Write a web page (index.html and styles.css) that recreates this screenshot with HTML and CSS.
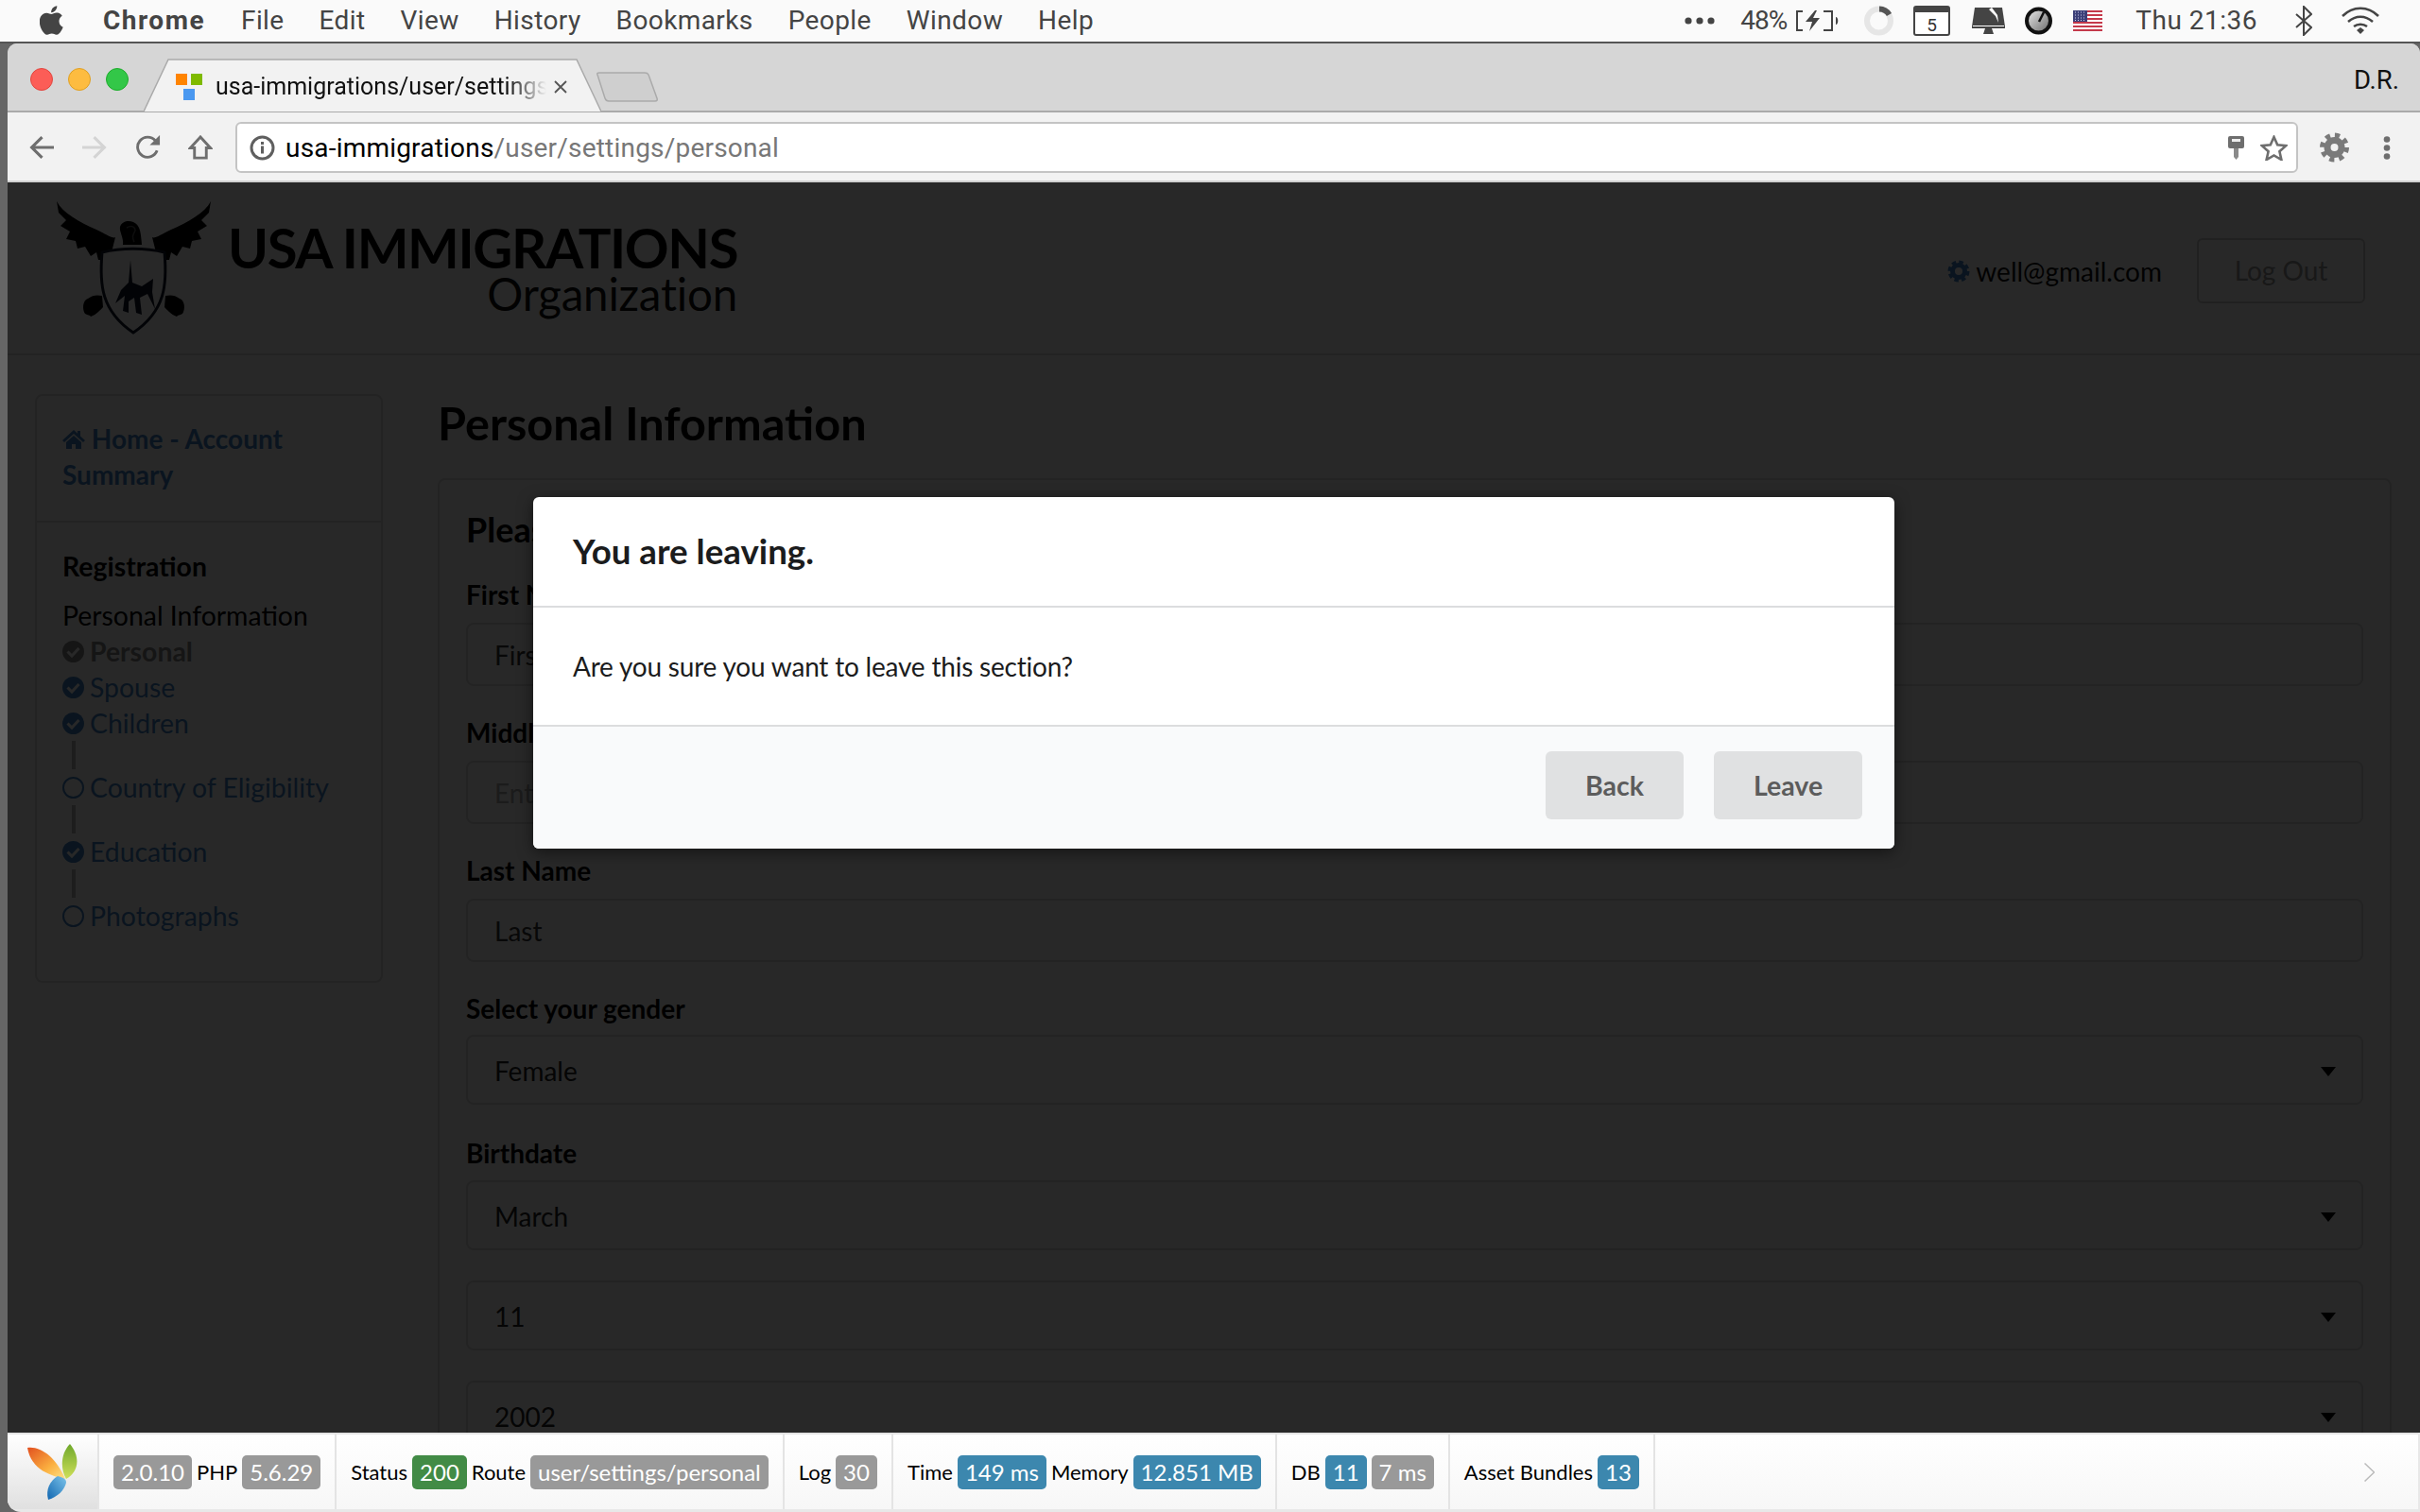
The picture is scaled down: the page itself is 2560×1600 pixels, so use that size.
FILE: index.html
```html
<!DOCTYPE html>
<html>
<head>
  <meta charset="utf-8">
  <title>usa-immigrations/user/settings/personal</title>
  <link rel="stylesheet" href="styles.css">
</head>
<body>
<!-- mac menu bar -->
<div class="menubar">
  <svg class="apple" viewBox="4 2 17 20"><path d="M18.71 19.5c-.83 1.24-1.71 2.45-3.05 2.47-1.34.03-1.77-.79-3.29-.79-1.53 0-2 .77-3.27.82-1.31.05-2.3-1.32-3.14-2.53C4.25 17 2.94 12.45 4.7 9.39c.87-1.52 2.43-2.48 4.12-2.51 1.28-.02 2.5.87 3.29.87.78 0 2.26-1.07 3.81-.91.65.03 2.47.26 3.64 1.98-.09.06-2.17 1.28-2.15 3.81.03 3.02 2.65 4.03 2.68 4.04-.03.07-.42 1.44-1.38 2.83M13 3.5c.73-.83 1.94-1.46 2.94-1.5.13 1.17-.34 2.35-1.04 3.19-.69.85-1.83 1.51-2.95 1.42-.15-1.15.41-2.35 1.05-3.11z"/></svg>
  <div class="menu-app">Chrome</div>
  <div class="menu-items">
    <span>File</span><span>Edit</span><span>View</span><span>History</span><span>Bookmarks</span><span>People</span><span>Window</span><span>Help</span>
  </div>
  <div class="status">
    <svg class="st-dots" viewBox="0 0 32 8"><circle cx="4" cy="4" r="3.6"/><circle cx="16" cy="4" r="3.6"/><circle cx="28" cy="4" r="3.6"/></svg>
    <span class="st-pct">48%</span>
    <svg class="st-batt" viewBox="0 0 47 22"><path d="M8 1H2v20h6M30 1h9v20h-9" fill="none" stroke="#444" stroke-width="2"/><path d="M21 0L11 12h7l-3 10 11-14h-7l4-8z"/><path d="M43 7c3 0 3 8 0 8z"/></svg>
    <svg class="st-spin" viewBox="0 0 31 32"><circle cx="15.5" cy="16" r="12.5" fill="none" stroke="#e6e6e6" stroke-width="6"/><path d="M16 3.500a12.500 12.500 0 0 1 10.500 6" fill="none" stroke="#555" stroke-width="6"/></svg>
    <svg class="st-cal" viewBox="0 0 39 32"><rect x="1" y="1" width="37" height="30" rx="2" fill="#fff" stroke="#444" stroke-width="2"/><rect x="1" y="1" width="37" height="6" fill="#444"/><text x="19.500" y="27" text-anchor="middle" font-family="Roboto" font-size="19" fill="#333">5</text></svg>
    <svg class="st-mon" viewBox="0 0 35 28"><path d="M3 0h29l3 20H0z" fill="#444"/><path d="M21 0l6 8 1 8-3-7-7-7z" fill="#fff"/><rect x="1" y="19" width="33" height="3" fill="#fff"/><path d="M0 20h35v2H0zM14 22h7l2 6H12z" fill="#444"/></svg>
    <svg class="st-gauge" viewBox="0 0 31 30">
      <defs><linearGradient id="gg" x1="0" y1="0" x2="1" y2="1"><stop offset="0" stop-color="#eee"/><stop offset="1" stop-color="#666"/></linearGradient></defs>
      <circle cx="15.500" cy="15" r="12.500" fill="url(#gg)" stroke="#111" stroke-width="4"/><path d="M21 6l-5 10" stroke="#111" stroke-width="2.500"/>
    </svg>
    <svg class="st-flag" viewBox="0 0 31 22">
      <rect width="31" height="22" fill="#fff"/>
      <path d="M0 0h31v2H0zM0 4h31v2H0zM0 8h31v2H0zM0 12h31v2H0zM0 16h31v2H0zM0 20h31v2H0z" fill="#c4394a"/>
      <rect width="15" height="12" fill="#3c3f78"/>
      <path d="M2 2h11M2 5h11M2 8h11M2 10.500h11" stroke="#cfd2ea" stroke-width="1" stroke-dasharray="1 2"/>
    </svg>
    <span class="st-time">Thu 21:36</span>
    <svg class="st-bt" viewBox="0 0 18 32"><path d="M1 9l16 14-8 8V1l8 8L1 23" fill="none" stroke="#444" stroke-width="2"/></svg>
    <svg class="st-wifi" viewBox="0 0 42 29"><path d="M2 10c11-11 27-11 38 0M8 16c8-7 18-7 26 0M14 21c4-3 10-3 14 0" fill="none" stroke="#444" stroke-width="2.500"/><path d="M17 25l4-3 4 3-4 4z"/></svg>
  </div>
</div>

<div class="window">
  <!-- browser chrome -->
  <div class="tabstrip">
    <div class="lights">
      <div class="light light-red"></div>
      <div class="light light-yellow"></div>
      <div class="light light-green"></div>
    </div>
    <div class="tab">
      <svg class="tab-shape" viewBox="0 0 484 57"><path d="M0 56L26 1H458L484 56" fill="#f2f2f2" stroke="#aaa" stroke-width="1.500"/></svg>
      <svg class="favicon" viewBox="0 0 28 28"><rect width="12" height="12" fill="#ff8400"/><rect x="16" width="12" height="12" fill="#7fba00"/><rect x="8" y="16" width="12" height="12" fill="#4a98f0"/></svg>
      <span class="tab-title">usa-immigrations/user/settings/personal</span>
      <svg class="tab-close" viewBox="0 0 14 14"><path d="M1 1l12 12M13 1L1 13" stroke="#555" stroke-width="1.800"/></svg>
    </div>
    <svg class="newtab" viewBox="0 0 66 32"><path d="M2 3Q1 1 4 1H52Q55 1 56 3L65 28Q66 31 63 31H14Q11 31 10 28z" fill="#cfcfcf" stroke="#aaa" stroke-width="1.500"/></svg>
    <div class="profile">D.R.</div>
  </div>
  <div class="toolbar">
    <svg class="tool tool-back" viewBox="0 0 25 25"><path d="M25 12.500H3M13 2L2.500 12.500 13 23" fill="none" stroke="#6e6e6e" stroke-width="3"/></svg>
    <svg class="tool tool-fwd" viewBox="0 0 25 25"><path d="M0 12.500h22M12 2l10.500 10.500L12 23" fill="none" stroke="#d4d4d4" stroke-width="3"/></svg>
    <svg class="tool" viewBox="0 0 27 27"><path d="M23 17a11 11 0 1 1-2-11" fill="none" stroke="#6e6e6e" stroke-width="3"/><path d="M26 0v11H15z" fill="#6e6e6e"/></svg>
    <svg class="tool" viewBox="0 0 25 27"><path d="M12.500 2L1.500 14H6v11h13V14h4.500z" fill="none" stroke="#6e6e6e" stroke-width="3"/></svg>
    <div class="urlbar">
      <svg class="url-info" viewBox="0 0 27 27"><circle cx="13.500" cy="13.500" r="11.500" fill="none" stroke="#5f5f5f" stroke-width="3"/><rect x="12" y="11.500" width="3" height="8" fill="#5f5f5f"/><rect x="12" y="7" width="3" height="3" fill="#5f5f5f"/></svg>
      <div class="url-text"><span class="url-host">usa-immigrations</span>/user/settings/personal</div>
      <svg class="url-key" viewBox="0 0 17 25"><rect x="0" y="0" width="17" height="13" rx="2" fill="#6e6e6e"/><rect x="4" y="3" width="9" height="3" fill="#eee"/><path d="M6 13h5v9l-2.500 3L6 22z" fill="#8a8a8a"/></svg>
      <svg class="url-star" viewBox="0 0 29 27"><path d="M14.500 2l3.700 8.300 9 .9-6.800 6 2 8.800-7.900-4.600L6.600 26l2-8.800-6.800-6 9-.9z" fill="none" stroke="#6e6e6e" stroke-width="2.600"/></svg>
    </div>
    <svg class="ext-gear" viewBox="0 0 31 32"><circle cx="15.500" cy="16" r="12.500" fill="none" stroke="#7a7a7a" stroke-width="6" stroke-dasharray="5 4.820"/><circle cx="15.500" cy="16" r="7.500" fill="none" stroke="#7a7a7a" stroke-width="7"/></svg>
    <svg class="more" viewBox="0 0 8 25"><circle cx="4" cy="3.500" r="3.300"/><circle cx="4" cy="12.500" r="3.300"/><circle cx="4" cy="21.500" r="3.300"/></svg>
  </div>

  <div class="viewport">
    <!-- the page under the dimmer -->
    <header class="site-header">
      <div class="brand">
        <svg class="eagle" viewBox="0 0 163 141">
          <g id="wing">
            <path d="M0 0C6 12 24 22 42 30C52 35 60 40 62 38L56 62 44 62 42 54 36 58 30 48 22 50 20 42 10 40 14 32 4 26 10 20 2 12z"/>
            <path d="M33 103c-6 2-6 12-3 16 3 2 5 1 6 3 6-2 11-8 13-10l-1-12c-5-1-10-1-15 3z"/>
          </g>
          <use href="#wing" transform="matrix(-1 0 0 1 163 0)"/>
          <path d="M70 46c1-8-4-14-3-19 2-6 9-7 14-5 7 3 8 10 9 24z"/>
          <path d="M74 28c5-3 9-1 9 3-2 4-4 7-1 12" fill="none" stroke="#555" stroke-width="1.500"/>
          <path d="M48 54c20-5 46-5 66 0 3 34 1 62-33 85C47 116 45 88 48 54z" fill="#fff" stroke="#101828" stroke-width="3"/>
          <path d="M78 62l2 24 10 4 12-8-1 14 3 18-8-16-8 4 2 18-6-2-2-16-6 4 0 12-6-2 2-16-10 8 6-14 8-8z" fill="#101828"/>
        </svg>
        <div class="brand-text">
          <div class="brand-name">USA IMMIGRATIONS</div>
          <div class="brand-sub">Organization</div>
        </div>
      </div>
      <div class="account">
        <svg class="account-gear" viewBox="0 0 24 24"><circle cx="12" cy="12" r="8.500" fill="none" stroke="#4183c4" stroke-width="6" stroke-dasharray="4 2.670"/><circle cx="12" cy="12" r="6.500" fill="none" stroke="#4183c4" stroke-width="5"/></svg>
        <span class="account-mail">well@gmail.com</span>
        <div class="logout">Log Out</div>
      </div>
    </header>

    <div class="page">
      <aside class="sidebar">
        <div class="side-home">
          <svg class="home-ico" viewBox="0 0 24 20"><path d="M12 0L0 11l2 2L12 4l10 9 2-2-5-4.500V1h-3v2.800zM4 13v7h6v-5h4v5h6v-7l-8-7z"/></svg>
          Home - Account Summary
        </div>
        <div class="side-steps">
          <div class="side-title">Registration</div>
          <div class="side-row">Personal Information</div>
          <div class="step step-current">
            <svg class="step-ico" viewBox="0 0 23 23"><circle cx="11.500" cy="11.500" r="11.500" fill="#888"/><path d="M5.500 11.500l4.500 4.500 7.500-8" fill="none" stroke="#fff" stroke-width="3"/></svg>
            Personal
          </div>
          <div class="step">
            <svg class="step-ico" viewBox="0 0 23 23"><circle cx="11.500" cy="11.500" r="11.500" fill="#4183c4"/><path d="M5.500 11.500l4.500 4.500 7.500-8" fill="none" stroke="#fff" stroke-width="3"/></svg>
            Spouse
          </div>
          <div class="step">
            <svg class="step-ico" viewBox="0 0 23 23"><circle cx="11.500" cy="11.500" r="11.500" fill="#4183c4"/><path d="M5.500 11.500l4.500 4.500 7.500-8" fill="none" stroke="#fff" stroke-width="3"/></svg>
            Children
          </div>
          <div class="step-line"></div>
          <div class="step">
            <svg class="step-ico" viewBox="0 0 23 23"><circle cx="11.500" cy="11.500" r="10.500" fill="none" stroke="#4183c4" stroke-width="2"/></svg>
            Country of Eligibility
          </div>
          <div class="step-line"></div>
          <div class="step">
            <svg class="step-ico" viewBox="0 0 23 23"><circle cx="11.500" cy="11.500" r="11.500" fill="#4183c4"/><path d="M5.500 11.500l4.500 4.500 7.500-8" fill="none" stroke="#fff" stroke-width="3"/></svg>
            Education
          </div>
          <div class="step-line"></div>
          <div class="step">
            <svg class="step-ico" viewBox="0 0 23 23"><circle cx="11.500" cy="11.500" r="10.500" fill="none" stroke="#4183c4" stroke-width="2"/></svg>
            Photographs
          </div>
        </div>
      </aside>

      <main class="content">
        <h1 class="page-title">Personal Information</h1>
        <div class="form-card">
          <div class="form-title">Please enter your details</div>
          <div class="field">
            <div class="field-label">First Name</div>
            <input class="input" placeholder="First">
          </div>
          <div class="field">
            <div class="field-label">Middle Name</div>
            <input class="input input-faint" placeholder="Enter your middle name">
          </div>
          <div class="field">
            <div class="field-label">Last Name</div>
            <input class="input" placeholder="Last">
          </div>
          <div class="field field-gender">
            <div class="field-label field-label-tight">Select your gender</div>
            <div class="select">Female</div>
          </div>
          <div class="field field-select">
            <div class="field-label">Birthdate</div>
            <div class="select">March</div>
          </div>
          <div class="field field-select">
            <div class="select">11</div>
          </div>
          <div class="field">
            <div class="select">2002</div>
          </div>
        </div>
      </main>
    </div>

    <!-- dimmer and modal -->
    <div class="dimmer">
      <div class="modal">
        <div class="modal-header">You are leaving.</div>
        <div class="modal-body">Are you sure you want to leave this section?</div>
        <div class="modal-actions">
          <button class="btn btn-back">Back</button>
          <button class="btn btn-leave">Leave</button>
        </div>
      </div>
    </div>
  </div>

  <!-- yii debug toolbar -->
  <div class="debugbar">
    <div class="debug-logo">
      <svg class="yii" viewBox="0 0 55 59">
        <defs>
          <linearGradient id="yo" x1="0" y1="0" x2="1" y2="1"><stop offset="0" stop-color="#e2501f"/><stop offset=".6" stop-color="#fbb040"/><stop offset="1" stop-color="#fde38a"/></linearGradient>
          <linearGradient id="yg" x1="0" y1="0" x2="0" y2="1"><stop offset="0" stop-color="#6fa82b"/><stop offset="1" stop-color="#cfe05a"/></linearGradient>
          <linearGradient id="yb" x1="1" y1="0" x2="0" y2="1"><stop offset="0" stop-color="#7cc4ea"/><stop offset="1" stop-color="#1166b0"/></linearGradient>
        </defs>
        <path d="M0 4C14 2 30 14 40 37 26 34 4 28 0 4z" fill="url(#yo)"/>
        <path d="M45 0c10 12 11 28 -4 37-7-12-5-28 4-37z" fill="url(#yg)"/>
        <path d="M32 34c8 2 9 4 9 7-2 8-9 15-19 18-3-11 2-20 10-25z" fill="url(#yb)"/>
      </svg>
    </div>
    <div class="debug-cell"><span class="tag">2.0.10</span>PHP<span class="tag">5.6.29</span></div>
    <div class="debug-cell">Status<span class="tag tag-green">200</span>Route<span class="tag">user/settings/personal</span></div>
    <div class="debug-cell">Log<span class="tag">30</span></div>
    <div class="debug-cell">Time<span class="tag tag-blue">149 ms</span>Memory<span class="tag tag-blue">12.851 MB</span></div>
    <div class="debug-cell">DB<span class="tag tag-blue">11</span><span class="tag">7 ms</span></div>
    <div class="debug-cell">Asset Bundles<span class="tag tag-blue">13</span></div>
    <svg class="debug-arrow" viewBox="0 0 11 20"><path d="M0.500 0.500l10 9.500-10 9.500" fill="none" stroke="#bbb" stroke-width="1.500"/></svg>
  </div>
</div>
</body>
</html>
```

FILE: styles.css
```css
* {
  box-sizing: border-box;
}

body {
  margin: 0;
  width: 2560px;
  height: 1600px;
  overflow: hidden;
  background: #666;
  font-family: 'Lato', sans-serif;
}

/* Mac menu bar */
.menubar {
  display: flex;
  align-items: center;
  height: 46px;
  padding: 0 42px 1px 42px;
  background: #fafafa;
  border-bottom: 2px solid #555;
  font-family: 'Roboto', sans-serif;
  font-size: 28px;
  color: #444;
}

.menubar svg {
  fill: #444;
  flex: none;
}

.apple {
  width: 26px;
  height: 31px;
}

.menu-app {
  margin-left: 41px;
  font-weight: 700;
  letter-spacing: 1.5px;
}

.menu-items {
  display: flex;
  gap: 37px;
  margin-left: 38px;
  letter-spacing: 0.4px;
}

.status {
  display: flex;
  align-items: center;
  margin-left: auto;
}

.st-dots { width: 32px; height: 8px; }
.st-pct { margin-left: 27px; letter-spacing: -1px; }
.st-batt { width: 47px; height: 22px; margin-left: 9px; }
.st-spin { width: 31px; height: 32px; margin-left: 26px; }
.st-cal { width: 39px; height: 32px; margin-left: 21px; }
.st-mon { width: 35px; height: 28px; margin-left: 23px; }
.st-gauge { width: 31px; height: 30px; margin-left: 20px; }
.st-flag { width: 31px; height: 22px; margin-left: 21px; }
.st-time { margin-left: 35px; letter-spacing: 0.5px; }
.st-bt { width: 18px; height: 32px; margin-left: 40px; }
.st-wifi { width: 42px; height: 29px; margin-left: 30px; }

/* Browser window */
.window {
  display: flex;
  flex-direction: column;
  height: 1554px;
  margin-left: 8px;
  border-radius: 10px 10px 0 14px;
  overflow: hidden;
  background: #e8e8e8;
}

.tabstrip {
  display: flex;
  align-items: flex-end;
  height: 73px;
  flex: none;
  background: #d6d6d6;
  border-bottom: 2px solid #aaa;
}

.lights {
  display: flex;
  gap: 16px;
  align-self: flex-start;
  margin: 26px 0 0 24px;
}

.light {
  width: 24px;
  height: 24px;
  border-radius: 50%;
}

.light-red { background: #fc5d57; border: 1px solid #e2463f; }
.light-yellow { background: #fdbc40; border: 1px solid #dfa023; }
.light-green { background: #33c748; border: 1px solid #1dad2b; }

.tab {
  position: relative;
  display: flex;
  align-items: center;
  width: 484px;
  height: 57px;
  margin: 0 0 -2px 16px;
  padding: 2px 0 0 34px;
  font-family: 'Roboto', sans-serif;
  font-size: 25px;
  color: #111;
}

.tab-shape {
  position: absolute;
  left: 0;
  top: 0;
  width: 484px;
  height: 57px;
}

.favicon {
  position: relative;
  width: 28px;
  height: 28px;
  flex: none;
}

.tab-title {
  position: relative;
  width: 350px;
  margin-left: 14px;
  white-space: nowrap;
  overflow: hidden;
  -webkit-mask-image: linear-gradient(90deg, #000 88%, transparent);
  mask-image: linear-gradient(90deg, #000 88%, transparent);
}

.tab-close {
  position: relative;
  width: 14px;
  height: 14px;
  margin-left: 8px;
  flex: none;
}

.newtab {
  width: 66px;
  height: 32px;
  margin: 0 0 9px -6px;
}

.profile {
  margin: 0 22px 16px auto;
  font-family: 'Roboto', sans-serif;
  font-size: 27.5px;
  color: #111;
}

.toolbar {
  display: flex;
  align-items: center;
  flex: none;
  height: 74px;
  padding: 2px 23px 0;
  background: #f2f2f2;
  border-bottom: 2px solid #d0d0d0;
}

.tool {
  width: 26px;
  height: 26px;
  margin-right: 29px;
  flex: none;
}

.tool-back { margin-right: 30px; }
.tool-fwd { margin-right: 31px; }

.urlbar {
  display: flex;
  align-items: center;
  width: 2182px;
  height: 54px;
  margin-left: -5px;
  padding: 0 9px 0 13px;
  background: #fff;
  border: 2px solid #c4c4c4;
  border-radius: 6px;
  font-family: 'Roboto', sans-serif;
  font-size: 28px;
  letter-spacing: 0.2px;
  color: #777;
}

.url-info {
  width: 27px;
  height: 27px;
  flex: none;
}

.url-text {
  margin-left: 11px;
}

.url-host {
  color: #000;
}

.url-key {
  width: 17px;
  height: 25px;
  margin-left: auto;
  flex: none;
}

.url-star {
  width: 29px;
  height: 27px;
  margin-left: 17px;
  flex: none;
}

.ext-gear {
  width: 31px;
  height: 32px;
  margin-left: 23px;
  flex: none;
  filter: blur(0.6px);
}

.more {
  width: 8px;
  height: 25px;
  margin-left: 36px;
  fill: #6e6e6e;
  flex: none;
}

/* Page behind the dimmer */
.viewport {
  position: relative;
  flex: 1;
  overflow: hidden;
  background: #fff;
  font-size: 28px;
  color: #222;
}

.site-header {
  display: flex;
  align-items: center;
  justify-content: space-between;
  height: 183px;
  padding: 0 58px 0 52px;
  border-bottom: 2px solid #ddd;
}

.brand {
  display: flex;
  align-items: flex-start;
  gap: 18px;
}

.eagle {
  width: 163px;
  height: 141px;
  fill: #000;
  flex: none;
}

.brand-text {
  display: flex;
  flex-direction: column;
  align-items: flex-end;
  margin-top: 23px;
}

.brand-name {
  font-size: 58px;
  font-weight: 700;
  line-height: 52px;
  letter-spacing: -1.4px;
  color: #000;
}

.brand-sub {
  font-size: 47.5px;
  line-height: 46px;
  letter-spacing: -0.2px;
  color: #111;
}

.account {
  display: flex;
  align-items: center;
  padding-top: 6px;
}

.account-gear {
  width: 24px;
  height: 24px;
  margin-right: 6px;
}

.account-mail {
  color: #111;
}

.logout {
  width: 178px;
  height: 69px;
  margin-left: 37px;
  border: 2px solid #ccc;
  border-radius: 6px;
  line-height: 65px;
  text-align: center;
  color: #999;
}

.page {
  display: flex;
  align-items: flex-start;
  gap: 58px;
  padding: 41px 30px 0 29px;
}

.sidebar {
  flex: none;
  width: 368px;
  border: 2px solid #ddd;
  border-radius: 8px;
  font-size: 28.4px;
  line-height: 38px;
}

.side-home {
  padding: 26px 27px 30px;
  border-bottom: 2px solid #ddd;
  font-size: 28px;
  font-weight: 700;
  color: #4183c4;
}

.home-ico {
  width: 24px;
  height: 20px;
  fill: #4183c4;
}

.side-steps {
  padding: 27px 27px 50px;
}

.side-title {
  margin-bottom: 14px;
  font-weight: 700;
  color: #000;
}

.side-row {
  color: #000;
}

.step {
  display: flex;
  align-items: center;
  gap: 6px;
  height: 38px;
  color: #4183c4;
}

.step-current {
  color: #888;
  font-weight: 700;
}

.step-ico {
  width: 23px;
  height: 23px;
  flex: none;
}

.step-line {
  width: 4px;
  height: 30px;
  margin-left: 10px;
  background: #bbb;
}

.content {
  flex: 1;
  min-width: 0;
}

.page-title {
  margin: 0 0 29px;
  font-size: 48.6px;
  font-weight: 700;
  line-height: 60px;
  color: #000;
}

.form-card {
  padding: 30px 28px 0;
  border: 2px solid #ddd;
  border-radius: 8px;
}

.form-title {
  margin-bottom: 30px;
  font-size: 36px;
  font-weight: 700;
  line-height: 44px;
  color: #000;
}

.field {
  margin-bottom: 32px;
}

.field-gender {
  margin-bottom: 34px;
}

.field-select {
  margin-bottom: 32px;
}

.field-label {
  height: 34px;
  margin-bottom: 13px;
  font-weight: 700;
  line-height: 34px;
  color: #000;
}

.field-select .field-label {
  margin-bottom: 12px;
}

.field-gender .field-label {
  margin-bottom: 11px;
}

.input {
  display: block;
  width: 100%;
  height: 67px;
  padding: 0 28px;
  border: 2px solid #ddd;
  border-radius: 8px;
  background: #fff;
  font: 28px 'Lato', sans-serif;
  outline: none;
}

.input::placeholder {
  color: #333;
  opacity: 1;
}

.input-faint::placeholder {
  color: #aaa;
}

.select {
  position: relative;
  height: 74px;
  padding: 0 28px;
  border: 2px solid #ddd;
  border-radius: 8px;
  line-height: 72px;
  color: #222;
}

.select::after {
  content: "";
  position: absolute;
  right: 27px;
  top: 32px;
  border-style: solid;
  border-width: 10px 8.500px 0;
  border-color: #000 transparent transparent;
}

.dimmer {
  position: absolute;
  left: 0;
  top: 0;
  right: 0;
  bottom: 0;
  display: flex;
  justify-content: center;
  padding-top: 333px;
  background: rgba(0, 0, 0, 0.845);
}

.modal {
  width: 1440px;
  height: 372px;
  border-radius: 6px;
  overflow: hidden;
  background: #fff;
  box-shadow: 0 4px 16px rgba(0, 0, 0, 0.5);
  color: #1b1c1d;
}

.modal-header {
  height: 117px;
  padding-left: 42px;
  border-bottom: 2px solid #dcddde;
  font-size: 36.7px;
  font-weight: 700;
  line-height: 115px;
}

.modal-body {
  height: 124px;
  padding-left: 42px;
  line-height: 124px;
  letter-spacing: -0.2px;
}

.modal-actions {
  display: flex;
  justify-content: flex-end;
  gap: 32px;
  height: 131px;
  padding: 26px 34px 0 0;
  border-top: 2px solid #dcddde;
  background: #f9fafb;
}

.btn {
  height: 72px;
  padding: 0;
  border: 0;
  border-radius: 6px;
  background: #e0e1e2;
  font: 700 28.5px 'Lato', sans-serif;
  color: #5c5c5c;
}

.btn-back { width: 146px; }
.btn-leave { width: 157px; }

/* Debug toolbar */
.debugbar {
  display: flex;
  align-items: stretch;
  flex: none;
  height: 81px;
  margin: 0 2px 3px 0;
  border-top: 2px solid #e4e4e4;
  background: linear-gradient(#fff, #f7f7f7);
  font-size: 22px;
  color: #000;
}

.debug-logo {
  display: flex;
  align-items: center;
  justify-content: center;
  width: 97px;
  padding-left: 2px;
  border-right: 2px solid #e4e4e4;
  background: linear-gradient(#fff, #e0e0e0);
}

.yii {
  width: 55px;
  height: 59px;
}

.debug-cell {
  display: flex;
  align-items: center;
  gap: 5px;
  padding: 0 15px;
  border-right: 2px solid #e4e4e4;
}

.tag {
  height: 36px;
  padding: 0 8px;
  border-radius: 5px;
  background: #999;
  font-size: 24px;
  line-height: 36px;
  color: #fff;
}

.tag-green { background: #428b46; }
.tag-blue { background: #3c87ae; }

.debug-arrow {
  width: 11px;
  height: 20px;
  margin: auto 46px auto auto;
}
```
